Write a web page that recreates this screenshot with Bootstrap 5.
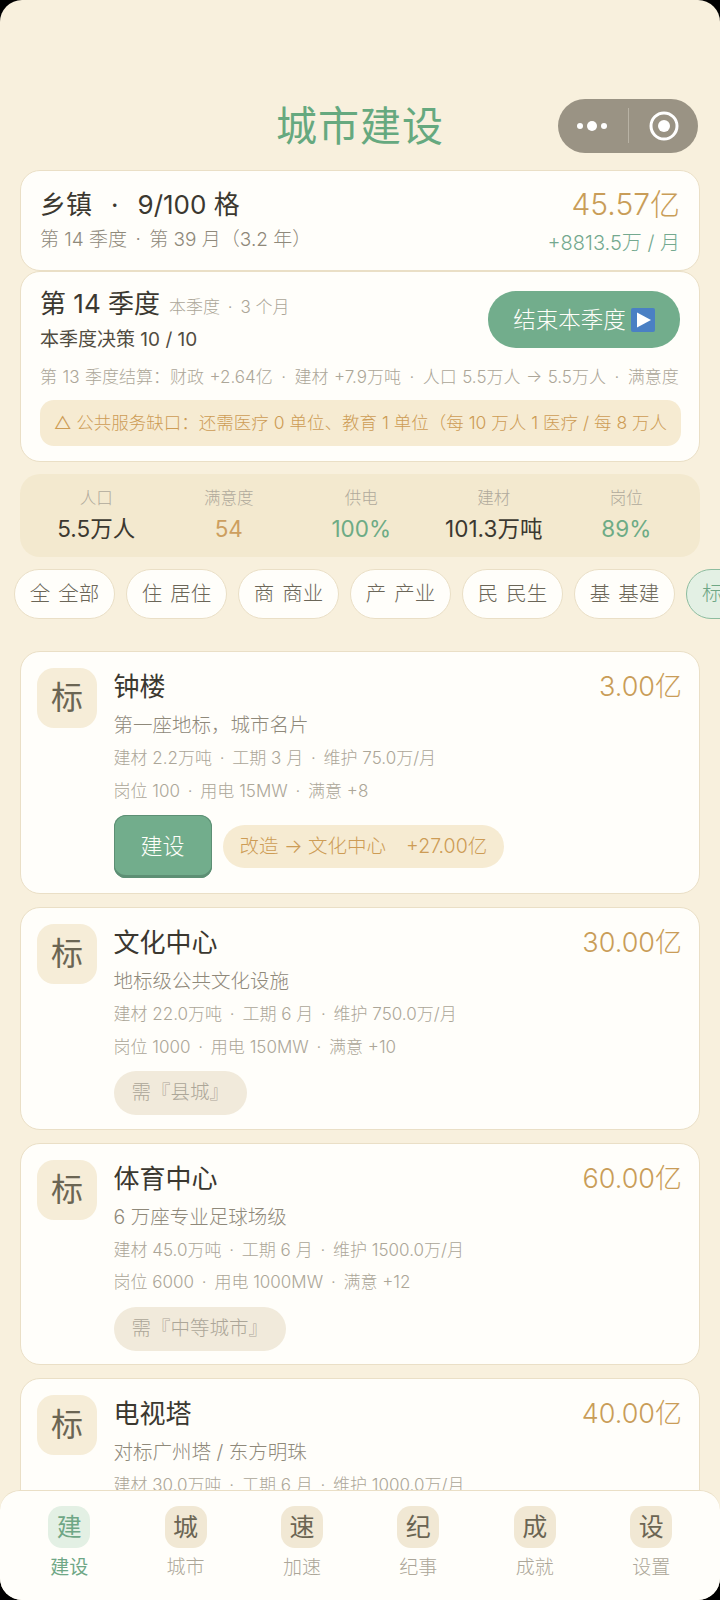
<!DOCTYPE html>
<html lang="zh">
<head>
<meta charset="utf-8">
<link href="https://cdn.jsdelivr.net/npm/bootstrap@5.3.0/dist/css/bootstrap.min.css" rel="stylesheet">
<style>
html,body{margin:0;height:1600px;background:#000;}
body{font-family:Inter,"Noto Sans CJK SC","Noto Sans",sans-serif;font-weight:300;color:#3b3830;overflow:hidden;}
.screen{width:720px;height:1600px;background:#f8f0dd;border-radius:22px;overflow:hidden;position:relative;}
.page-title{height:170px;padding-top:99px;}
.page-title h1{font-size:41px;line-height:54px;color:#66a97f;font-weight:400;margin:0;letter-spacing:1px;}
.capsule{position:absolute;left:558px;top:99px;width:140px;height:54px;border-radius:27px;background:#9a9384;}
.capsule i{position:absolute;left:70px;top:9px;width:1px;height:35px;background:#b8b2a4;}
.capsule svg{position:absolute;}
.sep{margin:0 3px;}
.panel{background:#fffefa;border:1px solid #eadfc6;border-radius:20px;margin:0 20px;}
.summary{height:101px;padding:16px 19px 0;}
.t-main{font-size:26px;line-height:36px;font-weight:400;}
.t-main .dot{margin:0 19px;}
.t-sub{font-size:19px;line-height:28px;color:#8f897a;margin-top:3px;}
.money{font-size:30px;line-height:38px;color:#c99d58;margin-top:-2px;}
.rate{font-size:20px;line-height:26px;color:#74a98f;margin-top:7px;}
.quarter{height:191px;padding:14px 18px 0 19px;}
.q-title{font-size:26px;line-height:36px;font-weight:400;}
.q-note{font-size:17px;color:#aca698;margin-left:9px;font-weight:300;}
.q-dec{font-size:19px;line-height:28px;color:#514c41;font-weight:400;margin-top:1px;}
.end-btn{width:192px;height:57px;border-radius:28px;background:#72ad8c;color:#fffefa;font-size:22.5px;border:0;padding:0;margin:5px 1px 0 0;font-weight:300;}
.end-btn svg{vertical-align:-4px;margin-left:5px;}
.settle{font-size:17px;line-height:28px;color:#aca698;white-space:nowrap;overflow:hidden;margin-top:9px;word-spacing:.7px;}
.warn{height:46px;line-height:45px;background:#f6ebd2;border-radius:14px;color:#cd9c55;font-size:17.5px;padding-left:14px;white-space:nowrap;overflow:hidden;margin-top:9px;}
.stats{background:#f3e9cf;border-radius:20px;margin:12px 20px 0;height:83px;padding:12px 0 0 10px;}
.stat{width:132.5px;text-align:center;}
.stat .lbl{font-size:16.5px;line-height:24px;color:#b0aa9c;}
.stat .val{font-size:22.5px;line-height:34px;color:#3b3830;margin-top:2px;font-weight:400;}
.c-gold{color:#cd9f5f!important;}.c-green{color:#6dab85!important;}
.chips{margin-top:12px;padding-left:14px;gap:11px;white-space:nowrap;overflow:hidden;}
.chip{flex:0 0 101px;height:50px;line-height:48px;border:1px solid #eadfc6;border-radius:25px;background:#fffefa;text-align:center;font-size:20.5px;color:#6b6658;}
.chip span{margin-left:8px;}
.chip.on{background:#e3f0e4;border-color:#8dbc9f;color:#6fa786;text-align:left;padding-left:15px;}
.bcard{margin-top:13px;height:243px;padding:16px 17px 0 16px;position:relative;}
.bcard.first{margin-top:32px;}
.bcard.mid{height:222.5px;}
.tile{flex:0 0 60px;width:60px;height:60px;border-radius:17px;background:#f6edd8;color:#6b6553;font-size:32px;line-height:60px;text-align:center;margin-right:16.5px;font-weight:400;}
.b-head{margin-top:1px;}
.b-name{font-size:26px;line-height:36px;font-weight:400;}
.b-price{font-size:27px;line-height:36px;color:#c99d58;}
.b-desc{font-size:19.5px;line-height:26px;color:#8f897a;margin-top:7px;}
.b-info{font-size:17px;line-height:32.5px;color:#aca698;margin-top:4px;}
.b-acts{margin-top:8px;gap:11px;align-items:center;}
.build{width:98px;height:63px;border:0;border-radius:12px;background:#72ad8c;color:#fffefa;font-size:22px;font-weight:300;padding:0;box-shadow:inset 0 -3px 0 #5d8f74,inset 0 0 0 1px #5d8f74;}
.pill{height:43px;line-height:42px;border-radius:22px;padding:0 17px;background:#f6ebd2;color:#cd9c55;font-size:19.5px;}
.pill b{font-weight:300;margin-left:20px;}
.need{height:44px;line-height:43px;border-radius:22px;padding:0 18px;background:#f1eadb;color:#aca698;font-size:19.5px;margin-top:8px;display:inline-block;}
.tabbar{position:absolute;left:0;right:0;bottom:0;height:110px;background:#fffefa;border-top:1px solid #eadfc6;border-radius:20px 20px 0 0;padding-top:15px;}
.tab{width:116.4px;text-align:center;}
.tab .ic{width:42px;height:42px;border-radius:14px;background:#f1e8d4;margin:0 auto;font-size:25px;line-height:42px;color:#6b6553;font-weight:400;}
.tab .nm{font-size:19px;line-height:26px;color:#aca698;margin-top:7px;}
.tab.on .ic{background:#e3f0e4;color:#6fa786;}
.tab.on .nm{color:#6fa786;font-weight:400;}
.tabs-row{padding-left:11px;}
</style>
</head>
<body>
<div class="screen">
  <div class="page-title text-center"><h1>城市建设</h1></div>
  <div class="capsule">
    <svg style="left:16px;top:18px" width="36" height="18" viewBox="0 0 36 18"><circle cx="6" cy="9" r="3" fill="#fff"/><circle cx="18" cy="9" r="5" fill="#fff"/><circle cx="30" cy="9" r="3" fill="#fff"/></svg>
    <i></i>
    <svg style="left:91px;top:12px" width="30" height="30" viewBox="0 0 30 30"><circle cx="15" cy="15" r="13" fill="none" stroke="#fff" stroke-width="3"/><circle cx="15" cy="15" r="6" fill="#fff"/></svg>
  </div>

  <div class="panel summary d-flex justify-content-between">
    <div><div class="t-main">乡镇<span class="dot">·</span>9/100 格</div><div class="t-sub">第 14 季度<span class="sep"> · </span>第 39 月（3.2 年）</div></div>
    <div class="text-end"><div class="money">45.57亿</div><div class="rate">+8813.5万 / 月</div></div>
  </div>

  <div class="panel quarter">
    <div class="d-flex justify-content-between">
      <div><div class="q-title">第 14 季度<span class="q-note">本季度<span class="sep"> · </span>3 个月</span></div><div class="q-dec">本季度决策 10 / 10</div></div>
      <button class="end-btn" type="button">结束本季度<svg width="24" height="24" viewBox="0 0 24 24"><rect width="24" height="24" rx="2" fill="#4a80c4"/><path d="M6 4.5 20 12 6 19.5z" fill="#fff"/></svg></button>
    </div>
    <div class="settle">第 13 季度结算：财政 +2.64亿<span class="sep"> · </span>建材 +7.9万吨<span class="sep"> · </span>人口 5.5万人 → 5.5万人<span class="sep"> · </span>满意度</div>
    <div class="warn">△ 公共服务缺口：还需医疗 0 单位、教育 1 单位（每 10 万人 1 医疗 / 每 8 万人</div>
  </div>

  <div class="stats d-flex">
    <div class="stat"><div class="lbl">人口</div><div class="val">5.5万人</div></div>
    <div class="stat"><div class="lbl">满意度</div><div class="val c-gold">54</div></div>
    <div class="stat"><div class="lbl">供电</div><div class="val c-green">100%</div></div>
    <div class="stat"><div class="lbl">建材</div><div class="val">101.3万吨</div></div>
    <div class="stat"><div class="lbl">岗位</div><div class="val c-green">89%</div></div>
  </div>

  <div class="chips d-flex">
    <div class="chip">全<span>全部</span></div><div class="chip">住<span>居住</span></div><div class="chip">商<span>商业</span></div><div class="chip">产<span>产业</span></div><div class="chip">民<span>民生</span></div><div class="chip">基<span>基建</span></div><div class="chip on">标</div>
  </div>

  <div class="panel bcard first d-flex">
    <div class="tile">标</div>
    <div class="flex-grow-1">
      <div class="b-head d-flex justify-content-between"><div class="b-name">钟楼</div><div class="b-price">3.00亿</div></div>
      <div class="b-desc">第一座地标，城市名片</div>
      <div class="b-info">建材 2.2万吨<span class="sep"> · </span>工期 3 月<span class="sep"> · </span>维护 75.0万/月<br>岗位 100<span class="sep"> · </span>用电 15MW<span class="sep"> · </span>满意 +8</div>
      <div class="b-acts d-flex"><button class="build" type="button">建设</button><div class="pill">改造 → 文化中心<b>+27.00亿</b></div></div>
    </div>
  </div>

  <div class="panel bcard mid d-flex">
    <div class="tile">标</div>
    <div class="flex-grow-1">
      <div class="b-head d-flex justify-content-between"><div class="b-name">文化中心</div><div class="b-price">30.00亿</div></div>
      <div class="b-desc">地标级公共文化设施</div>
      <div class="b-info">建材 22.0万吨<span class="sep"> · </span>工期 6 月<span class="sep"> · </span>维护 750.0万/月<br>岗位 1000<span class="sep"> · </span>用电 150MW<span class="sep"> · </span>满意 +10</div>
      <div class="need">需『县城』</div>
    </div>
  </div>

  <div class="panel bcard mid d-flex">
    <div class="tile">标</div>
    <div class="flex-grow-1">
      <div class="b-head d-flex justify-content-between"><div class="b-name">体育中心</div><div class="b-price">60.00亿</div></div>
      <div class="b-desc">6 万座专业足球场级</div>
      <div class="b-info">建材 45.0万吨<span class="sep"> · </span>工期 6 月<span class="sep"> · </span>维护 1500.0万/月<br>岗位 6000<span class="sep"> · </span>用电 1000MW<span class="sep"> · </span>满意 +12</div>
      <div class="need">需『中等城市』</div>
    </div>
  </div>

  <div class="panel bcard mid d-flex">
    <div class="tile">标</div>
    <div class="flex-grow-1">
      <div class="b-head d-flex justify-content-between"><div class="b-name">电视塔</div><div class="b-price">40.00亿</div></div>
      <div class="b-desc">对标广州塔 / 东方明珠</div>
      <div class="b-info">建材 30.0万吨<span class="sep"> · </span>工期 6 月<span class="sep"> · </span>维护 1000.0万/月</div>
    </div>
  </div>

  <div class="tabbar">
    <div class="d-flex tabs-row">
      <div class="tab on"><div class="ic">建</div><div class="nm">建设</div></div>
      <div class="tab"><div class="ic">城</div><div class="nm">城市</div></div>
      <div class="tab"><div class="ic">速</div><div class="nm">加速</div></div>
      <div class="tab"><div class="ic">纪</div><div class="nm">纪事</div></div>
      <div class="tab"><div class="ic">成</div><div class="nm">成就</div></div>
      <div class="tab"><div class="ic">设</div><div class="nm">设置</div></div>
    </div>
  </div>
</div>
<script src="https://cdn.jsdelivr.net/npm/bootstrap@5.3.0/dist/js/bootstrap.bundle.min.js"></script>
</body>
</html>
